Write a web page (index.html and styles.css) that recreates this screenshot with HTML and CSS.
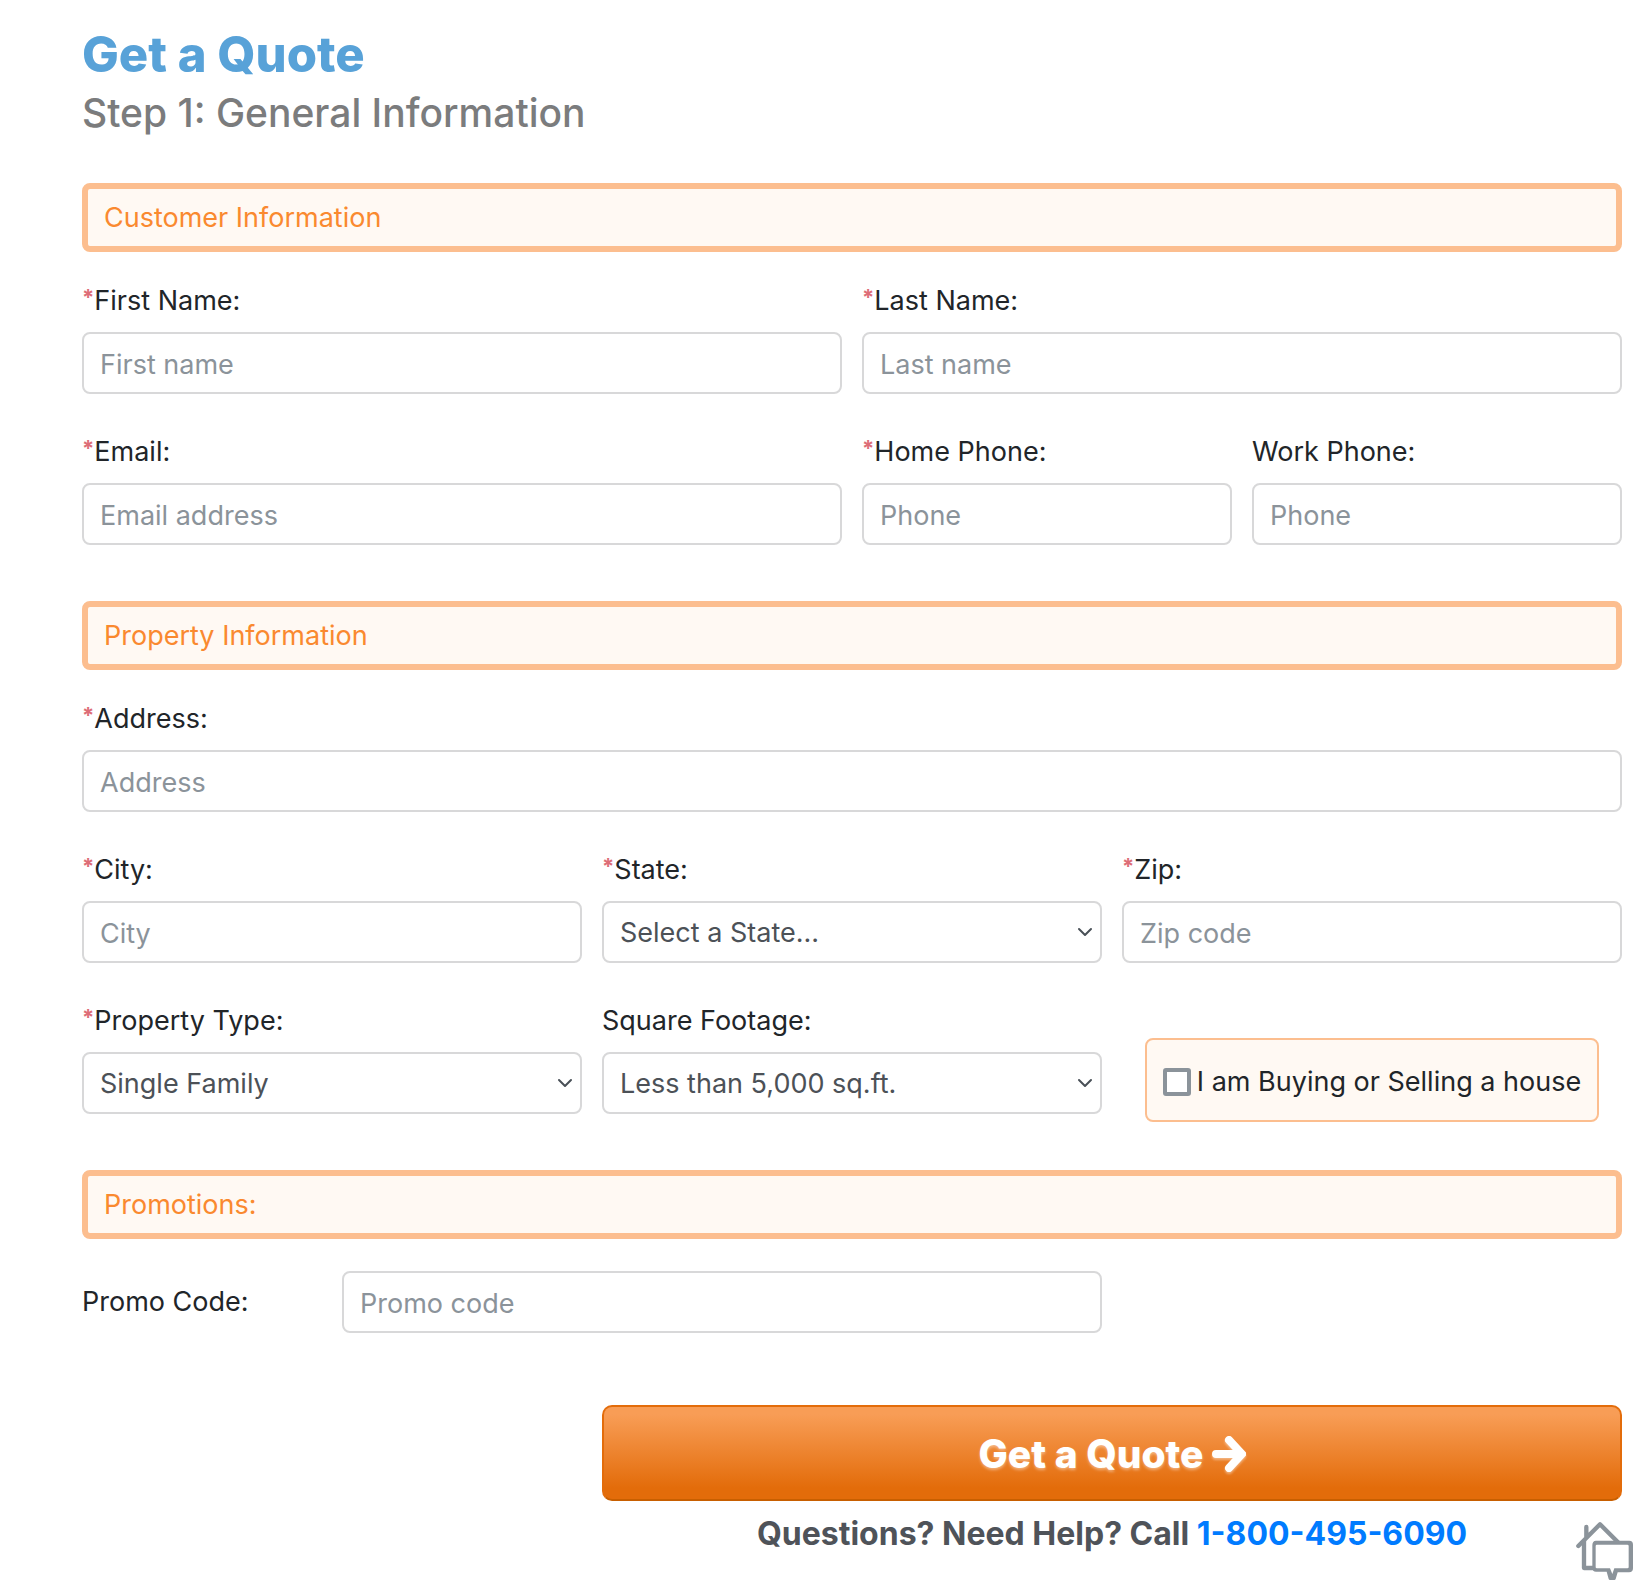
FILE: index.html
```html
<!DOCTYPE html>
<html lang="en">
<head>
  <meta charset="utf-8">
  <meta name="viewport" content="width=device-width, initial-scale=1">
  <title>Get a Quote</title>
  <link rel="stylesheet" href="styles.css">
</head>
<body>
  <main class="quote">
    <header class="quote-header">
      <h1 class="title">Get a Quote</h1>
      <h2 class="subtitle">Step 1: General Information</h2>
    </header>

    <form class="quote-form">
      <section class="section">
        <h3 class="banner">Customer Information</h3>
        <div class="fields">
          <div class="field span-6">
            <label class="label" for="first-name"><span class="required">*</span>First Name:</label>
            <input class="control" id="first-name" type="text" placeholder="First name">
          </div>
          <div class="field span-6">
            <label class="label" for="last-name"><span class="required">*</span>Last Name:</label>
            <input class="control" id="last-name" type="text" placeholder="Last name">
          </div>
          <div class="field span-6">
            <label class="label" for="email"><span class="required">*</span>Email:</label>
            <input class="control" id="email" type="email" placeholder="Email address">
          </div>
          <div class="field span-3">
            <label class="label" for="home-phone"><span class="required">*</span>Home Phone:</label>
            <input class="control" id="home-phone" type="tel" placeholder="Phone">
          </div>
          <div class="field span-3">
            <label class="label" for="work-phone">Work Phone:</label>
            <input class="control" id="work-phone" type="tel" placeholder="Phone">
          </div>
        </div>
      </section>

      <section class="section">
        <h3 class="banner">Property Information</h3>
        <div class="fields">
          <div class="field span-12">
            <label class="label" for="address"><span class="required">*</span>Address:</label>
            <input class="control" id="address" type="text" placeholder="Address">
          </div>
          <div class="field span-4">
            <label class="label" for="city"><span class="required">*</span>City:</label>
            <input class="control" id="city" type="text" placeholder="City">
          </div>
          <div class="field span-4">
            <label class="label" for="state"><span class="required">*</span>State:</label>
            <select class="control select" id="state">
              <option>Select a State...</option>
            </select>
          </div>
          <div class="field span-4">
            <label class="label" for="zip"><span class="required">*</span>Zip:</label>
            <input class="control" id="zip" type="text" placeholder="Zip code">
          </div>
          <div class="field span-4">
            <label class="label" for="property-type"><span class="required">*</span>Property Type:</label>
            <select class="control select" id="property-type">
              <option>Single Family</option>
            </select>
          </div>
          <div class="field span-4">
            <label class="label" for="footage">Square Footage:</label>
            <select class="control select" id="footage">
              <option>Less than 5,000 sq.ft.</option>
            </select>
          </div>
          <div class="span-4 check-cell">
            <label class="check" for="moving">
              <input class="checkbox" id="moving" type="checkbox">
              <span>I am Buying or Selling a house</span>
            </label>
          </div>
        </div>
      </section>

      <section class="section">
        <h3 class="banner">Promotions:</h3>
        <div class="fields promo">
          <label class="label span-2" for="promo">Promo Code:</label>
          <input class="control span-6" id="promo" type="text" placeholder="Promo code">
        </div>
      </section>

      <div class="actions">
        <button class="submit" type="submit">
          <span>Get a Quote</span>
          <svg class="arrow" viewBox="0 0 34 36" aria-hidden="true">
            <path d="M4 18H28M17 4L30 18L17 32" fill="none" stroke="currentColor" stroke-width="8" stroke-linecap="round"/>
          </svg>
        </button>
        <p class="help">Questions? Need Help? Call <a class="phone" href="tel:18004956090">1-800-495-6090</a></p>
      </div>
    </form>
  </main>

  <button class="chat" type="button" aria-label="Chat with us">
    <svg class="chat-icon" viewBox="48 63 174 180" aria-hidden="true">
      <path d="M79 81V112M55 138L120 73L174 127" fill="none" stroke="currentColor" stroke-width="13" stroke-linecap="round" stroke-linejoin="round"/>
      <path d="M72 122V204H100" fill="none" stroke="currentColor" stroke-width="13" stroke-linejoin="round"/>
      <path d="M108 122H208Q219 122 219 134V205Q219 217 207 217H173L167 237Q166 240 163 240H150Q147 240 146 237L140 215H108Q97 215 97 204V136Q97 122 108 122Z" fill="currentColor"/>
      <path d="M111 134H202Q206 134 206 138V202Q206 205 202 205H163L157 222L150 205H111Q107 205 107 202V138Q107 134 111 134Z" fill="#fff"/>
    </svg>
  </button>
</body>
</html>
```
FILE: styles.css
```css
*,
*::before,
*::after {
  box-sizing: border-box;
}

body {
  margin: 0;
  background: #fff;
  color: #212529;
  font-family: Inter, "Liberation Sans", sans-serif;
  font-size: 27px;
  line-height: 42px;
}

.quote {
  padding: 24px 28px 32px 82px;
}

.quote-header {
  margin-bottom: 45px;
}

.title,
.subtitle,
.banner,
.help {
  margin: 0;
}

.title {
  color: #58a2d8;
  font-size: 49px;
  font-weight: 800;
  line-height: 62px;
}

.subtitle {
  margin-top: 2px;
  color: #7b7c7d;
  font-size: 39px;
  font-weight: 500;
  line-height: 50px;
}

.section {
  margin-bottom: 56px;
}

.banner {
  margin-bottom: 28px;
  padding: 8px 16px 7px;
  border: 6px solid #fcbe8f;
  border-radius: 8px;
  background: #fff9f3;
  color: #fa892f;
  font-size: 27px;
  font-weight: 400;
}

.fields {
  display: grid;
  grid-template-columns: repeat(12, minmax(0, 1fr));
  gap: 37px 20px;
}

.span-2 { grid-column: span 2; }
.span-3 { grid-column: span 3; }
.span-4 { grid-column: span 4; }
.span-6 { grid-column: span 6; }
.span-12 { grid-column: span 12; }

.field {
  display: flex;
  flex-direction: column;
  gap: 10px;
}

.required {
  color: #dd6d77;
  font-size: 22px;
  font-weight: 700;
  line-height: 1;
  vertical-align: 5px;
}

.control {
  width: 100%;
  height: 62px;
  padding: 2px 16px 0;
  border: 2px solid #d8d8d9;
  border-radius: 8px;
  background: #fff;
  color: #4c5157;
  font: inherit;
}

.control::placeholder {
  color: #8b939a;
  opacity: 1;
}

.select {
  appearance: none;
  background: #fff url("data:image/svg+xml,%3Csvg xmlns='http://www.w3.org/2000/svg' viewBox='0 0 16 12'%3E%3Cpath d='M2 3l6 6 6-6' fill='none' stroke='%23495057' stroke-width='2' stroke-linecap='round' stroke-linejoin='round'/%3E%3C/svg%3E") no-repeat right 7px center / 16px 12px;
}

.check-cell {
  display: flex;
  align-items: flex-end;
  justify-content: center;
  margin: 0 0 -8px;
}

.check {
  display: flex;
  align-items: center;
  gap: 6px;
  padding: 21px 16px 17px;
  border: 2px solid #fcbe8f;
  border-radius: 8px;
  background: #fff9f3;
  white-space: nowrap;
}

.checkbox {
  appearance: none;
  width: 28px;
  height: 28px;
  margin: 0;
  border: 4px solid #8b939a;
  border-radius: 3px;
  background: #fff;
}

.checkbox:checked {
  background: #007bff;
}

.promo {
  align-items: center;
  padding-top: 4px;
}

.actions {
  display: flex;
  flex-direction: column;
  gap: 11px;
  width: calc((100% - 40px) / 3 * 2 + 20px);
  margin: 72px 0 0 auto;
}

.submit {
  display: flex;
  align-items: center;
  justify-content: center;
  gap: 8px;
  height: 96px;
  padding: 2px 24px 0;
  border: 2px solid #e36c0a;
  border-bottom-color: #c85f00;
  border-radius: 10px;
  background: linear-gradient(#f89d56 8%, #e36c0a 88%);
  color: #fff;
  font: inherit;
  font-size: 39px;
  font-weight: 800;
  text-shadow: 0 2px 3px #ffffff66;
}

.arrow {
  width: 34px;
  height: 36px;
  filter: drop-shadow(0 2px 1px #ffffff66);
}

.help {
  color: #4f5359;
  font-size: 32px;
  font-weight: 700;
  line-height: 44px;
  text-align: center;
}

.phone {
  color: #007bff;
  text-decoration: none;
}

.chat {
  position: fixed;
  right: 16px;
  bottom: 15px;
  padding: 0;
  border: 0;
  background: none;
  color: #8b939a;
  line-height: 0;
}

.chat-icon {
  width: 58px;
  height: 60px;
}
```
